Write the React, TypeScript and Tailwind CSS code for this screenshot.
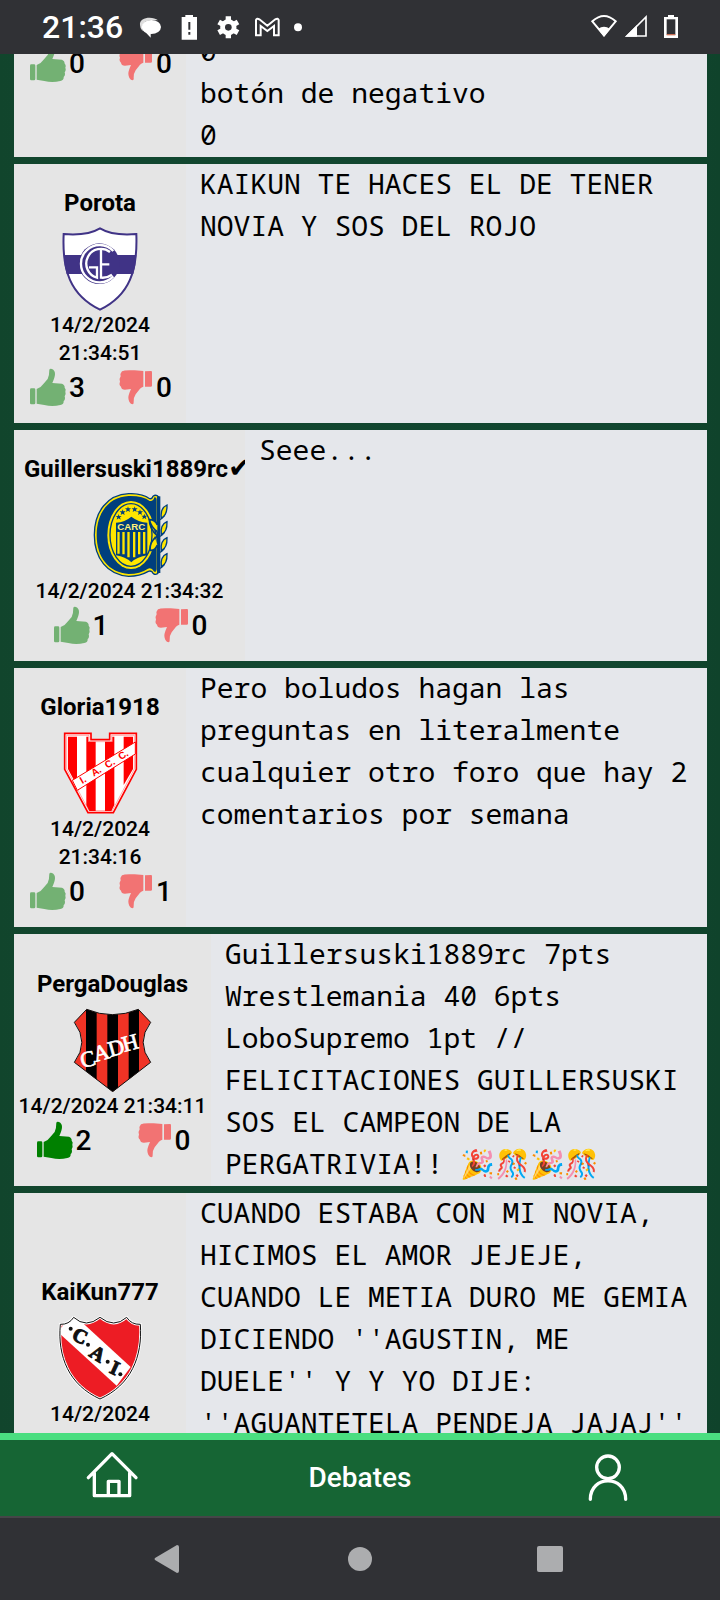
import type { ReactNode } from "react";

function ThumbUp() {
  return (
    <svg viewBox="90 624 117 126" className="h-[42px] w-[39px] shrink-0" fill="currentColor" aria-hidden="true">
      <rect x="93" y="688" width="16" height="48" rx="4" />
      <path d="M113 690Q126 686 133 675L146 660Q151 650 151 632Q153 627 159 630Q168 634 168 645Q168 654 160 672L189 674Q198 678 197 686Q202 691 199 698Q202 706 197 712Q200 722 194 726Q195 736 184 738Q160 744 136 738L113 734Z" />
    </svg>
  );
}

function ThumbDown() {
  return (
    <svg viewBox="340 624 117 126" className="h-[42px] w-[39px] shrink-0" fill="currentColor" aria-hidden="true">
      <path d="M433 637L451 636Q454 636 454 640V680Q454 683 450 683H433Z" />
      <path d="M428 636L402 634Q371 632 364 637Q357 645 360 652Q354 661 358 668Q354 678 361 683Q362 692 373 692L391 690Q383 708 383 716Q384 734 396 736Q400 735 399 729Q399 714 405 706L418 689Q423 684 428 683Z" />
    </svg>
  );
}

function ShieldGE() {
  return (
    <svg viewBox="174 201 252 252" className="size-[84px]" role="img" aria-label="GE">
      <path d="M191 222Q262 228 300 205Q338 228 409 222C413 330 390 405 300 449C210 405 186 330 191 222Z" fill="#fff" />
      <path d="M191 285H409Q408 315 400 342H200Q192 315 191 285Z" fill="#403386" />
      <path d="M191 222Q262 228 300 205Q338 228 409 222C413 330 390 405 300 449C210 405 186 330 191 222Z" fill="none" stroke="#403386" strokeWidth="6" />
      <circle cx="298" cy="311" r="61" fill="#403386" />
      <g fill="none" stroke="#fff" strokeWidth="7">
        <path d="M340 273A56 56 0 1 0 340 349" />
        <path d="M330 276A44 44 0 1 0 291 353V322H267" />
        <path d="M303 268V353Q320 355 336 344M303 313H328" />
      </g>
    </svg>
  );
}

function ShieldCARC() {
  const stars = [
    [354, 276],
    [366, 262],
    [382, 253],
    [402, 253],
    [418, 262],
    [431, 275],
  ];
  const leaves = [240, 290, 338, 386];
  return (
    <svg viewBox="262 204 252 252" className="size-[84px]" role="img" aria-label="CARC">
      <path d="M384 206Q425 205 447 221Q454 223 457 214Q466 207 474 216V442Q467 452 458 446Q453 435 443 439Q417 454 384 454C320 450 281 400 281 330C281 260 320 209 384 206Z" fill="#ffe600" stroke="#003f7d" strokeWidth="4" />
      <path d="M384 213Q427 212 447 228Q458 230 461 217Q468 216 468 224V433Q466 446 459 438Q453 427 442 431Q418 447 384 447C324 443 288 397 288 330C288 263 324 216 384 213Z" fill="#003f7d" />
      <ellipse cx="391" cy="330" rx="71" ry="102" fill="#ffe600" />
      <ellipse cx="391" cy="330" rx="63" ry="94" fill="none" stroke="#003f7d" strokeWidth="4" />
      <path d="M346 293Q373 291 392 275Q413 291 440 293V391Q410 395 392 412Q374 395 346 391Z" fill="#003f7d" />
      <path d="M350 321H357V386H350ZM365 321H372V388H365ZM380 321H387V397H380ZM397 321H404V397H397ZM412 321H419V388H412ZM427 321H434V386H427Z" fill="#ffe600" />
      <text x="392" y="315" textAnchor="middle" fontSize="29" fontWeight="700" fill="#fff17a" className="font-['Liberation_Sans']">CARC</text>
      {stars.map(([x, y]) => (
        <path key={x} transform={`translate(${x} ${y})`} d="M0-9L2-3H9L4 1L6 8L0 4L-6 8L-4 1L-9-3H-2Z" fill="#003f7d" />
      ))}
      <path d="M474 214V444" stroke="#003f7d" strokeWidth="10" />
      <path d="M446 284Q446 310 470 333Q446 350 448 376Q462 378 470 360M470 320Q452 308 446 284Q464 284 470 300" fill="#ffe600" stroke="#003f7d" strokeWidth="5" />
      {leaves.map((y) => (
        <path key={y} d={`M499 ${y}Q478 ${y + 9} 482 ${y + 39}Q500 ${y + 30} 499 ${y}ZM474 ${y + 46}Q484 ${y + 42} 492 ${y + 32}`} fill="#ffe600" stroke="#003f7d" strokeWidth="4" />
      ))}
    </svg>
  );
}

function ShieldIACC() {
  return (
    <svg viewBox="174 198 252 252" className="size-[84px]" role="img" aria-label="I.A.C.C.">
      <path d="M194 205H273V224H329V205H409V313L340 443H264L194 313Z" fill="#fff" stroke="#f00" strokeWidth="5" />
      <path d="M204 215H231V362L204 312ZM259 215H265V230H287V438H268L259 420ZM315 230H337V215H343V420L334 438H315ZM371 215H399V312L371 360Z" fill="#f00" />
      <path d="M200 211H267V230H335V211H403V312L337 437H267L200 312Z" fill="none" stroke="#f00" strokeWidth="1" />
      <path d="M217 346L406 231V267L232 376Z" fill="#fff" stroke="#f00" strokeWidth="3" />
      <g fontSize="30" fontWeight="700" fill="#f00" className="font-['Liberation_Sans']">
        <text transform="translate(247 357) rotate(-31)">I.</text>
        <text transform="translate(281 335) rotate(-31)">A.</text>
        <text transform="translate(322 311) rotate(-31)">C.</text>
        <text transform="translate(362 286) rotate(-31)">C.</text>
      </g>
    </svg>
  );
}

function ShieldCADH() {
  const outline = "M258 236Q335 268 413 236L450 275Q405 335 450 395L336 483L221 395Q266 335 221 275Z";
  return (
    <svg viewBox="211 232 252 252" className="size-[84px]" role="img" aria-label="CADH">
      <clipPath id="cadh">
        <path d={outline} />
      </clipPath>
      <g clipPath="url(#cadh)">
        <path d="M211 232H463V484H211Z" fill="#f03325" />
        <path d="M256 232H288V484H256ZM320 232H352V484H320ZM384 232H415V484H384Z" fill="#000" />
      </g>
      <path d={outline} fill="none" stroke="#111" strokeWidth="3" />
      <g fontSize="67" fill="#fff" stroke="#fff" strokeWidth="2" textAnchor="middle" className="font-['Liberation_Serif']">
        <text transform="translate(267 407) rotate(-15)">C</text>
        <text transform="translate(307 388) rotate(-15)">A</text>
        <text transform="translate(352 373) rotate(-15)">D</text>
        <text transform="translate(394 358) rotate(-15)">H</text>
      </g>
    </svg>
  );
}

function ShieldCAI() {
  const outline = "M181 403Q207 404 221 382Q258 416 300 382Q342 416 380 382Q394 404 421 403C428 500 393 585 300 627C207 585 172 500 181 403Z";
  return (
    <svg viewBox="174 378 252 252" className="size-[84px]" role="img" aria-label="C.A.I.">
      <clipPath id="cai">
        <path d={outline} />
      </clipPath>
      <path d={outline} fill="#ed1c24" />
      <path clipPath="url(#cai)" d="M174 426L215 371L245 396L392 531L350 587Z" fill="#fff" />
      <path d={outline} fill="none" stroke="#fff" strokeWidth="8" />
      <path d={outline} fill="none" stroke="#111" strokeWidth="3" />
      <g fontSize="60" fontWeight="700" fill="#111" stroke="#111" strokeWidth="3" textAnchor="middle" className="font-['Liberation_Serif']">
        <text transform="translate(232 456) rotate(25)">C</text>
        <text transform="translate(282 508) rotate(32)">A</text>
        <text transform="translate(336 552) rotate(25)">I</text>
      </g>
      <g fill="#111">
        <circle cx="212" cy="416" r="6" />
        <circle cx="264" cy="464" r="6" />
        <circle cx="323" cy="515" r="6" />
        <circle cx="361" cy="553" r="6" />
      </g>
    </svg>
  );
}

function Votes({ up, down, voted }: { up: number; down: number; voted?: boolean }) {
  return (
    <div className="flex w-full justify-center text-[28px] font-medium leading-[42px]">
      <button type="button" aria-label={`Me gusta ${up}`} className="flex max-w-[98px] flex-1 items-center justify-center gap-px">
        <span className={voted ? "text-[#008000]" : "text-[#73b173]"}>
          <ThumbUp />
        </span>
        {up}
      </button>
      <button type="button" aria-label={`No me gusta ${down}`} className="flex max-w-[98px] flex-1 items-center justify-center gap-[3px]">
        <span className="text-[#f27373]">
          <ThumbDown />
        </span>
        {down}
      </button>
    </div>
  );
}

type PostProps = {
  width?: string;
  name?: string;
  verified?: boolean;
  crest?: ReactNode;
  date?: string;
  votes?: ReactNode;
  align?: string;
  children: ReactNode;
};

function Post({ width = "w-[172px]", name, verified, crest, date, votes, align = "justify-center py-3.5", children }: PostProps) {
  return (
    <article className="flex bg-[#e5e7eb]">
      <aside className={`flex shrink-0 flex-col items-center overflow-hidden bg-[#e5e5e5] ${width} ${align}`}>
        {name && (
          <h2 className="h-[49px] w-full whitespace-nowrap px-2.5 text-center text-2xl font-bold leading-[51px]">
            {name}
            {verified && <span className="font-['DejaVu_Sans'] text-[28px] leading-none">✔</span>}
          </h2>
        )}
        {crest}
        {date && <time className="px-1 text-center text-[21px] font-medium leading-7">{date}</time>}
        {votes}
      </aside>
      <p className="-mt-0.5 min-w-0 flex-1 whitespace-pre-line px-3.5 pb-0.5 font-['Noto_Sans_Mono','DejaVu_Sans_Mono','Noto_Color_Emoji',monospace] text-[28px] leading-[42px]">
        {children}
      </p>
    </article>
  );
}

function StatusBar() {
  return (
    <header className="flex h-[54px] shrink-0 items-center bg-[#303135] px-[42px] text-white">
      <span className="text-[32px] font-medium leading-[54px]">21:36</span>
      <svg viewBox="405 30 510 102" className="ml-3 h-[34px] w-[170px]" aria-hidden="true">
        <path d="M420 75C417 50 460 48 474 61Q420 54 428 94Q420 86 420 75Z" fill="#ddd" />
        <ellipse cx="454" cy="81" rx="29" ry="21" fill="#fff" />
        <path d="M434 94L452 113V98Z" fill="#fff" />
        <path d="M545 51H556V45H579V51H591V119H545Z" fill="#fff" />
        <path d="M568 66V89M568 96V104" stroke="#303135" strokeWidth="6" />
        <g transform="translate(685 82)">
          <path d="M0-33V33M-29-16L29 16M-29 16L29-16" stroke="#fff" strokeWidth="16" />
          <circle r="17" fill="none" stroke="#fff" strokeWidth="15" />
          <circle r="10" fill="#303135" />
        </g>
        <path d="M768 106V60Q770 53 778 58L802 77L826 58Q834 53 836 60V106H822V78L802 93L782 78V106Z" fill="none" stroke="#fff" strokeWidth="6" />
        <circle cx="894" cy="82" r="12" fill="#fff" />
      </svg>
      <svg viewBox="690 30 264 102" className="ml-auto h-[34px] w-[88px]" aria-hidden="true">
        <path d="M697 64Q732 32 767 64L732 106Z" fill="none" stroke="#fff" strokeWidth="6" />
        <path d="M732 110L714 87Q732 74 750 87Z" fill="#fff" />
        <path d="M801 108L858 51V108Z" fill="none" stroke="#fff" strokeWidth="5" />
        <path d="M795 110L831 75V110Z" fill="#fff" />
        <path d="M924 45H942V51H954V114H912V51H924Z" fill="#fff" />
        <path d="M920 58H946V104H920Z" fill="#303135" />
        <path d="M920 102H946V106H920Z" fill="#c96f55" />
      </svg>
    </header>
  );
}

export default function App() {
  return (
    <div className="flex h-screen flex-col overflow-hidden bg-[#11452e] font-['Roboto',sans-serif] text-black">
      <StatusBar />
      <main className="min-h-0 flex-1 overflow-hidden bg-[linear-gradient(90deg,#11452c,#124730_15%,#114630_85%,#0f432b)] pl-3.5 pr-[13px]">
        <div className="-mt-[23px] flex flex-col gap-[7px]">
          <Post align="justify-start pt-3" votes={<Votes up={0} down={0} />}>
            {"0\nbotón de negativo\n0"}
          </Post>
          <Post name="Porota" crest={<ShieldGE />} date="14/2/2024 21:34:51" votes={<Votes up={3} down={0} />}>
            KAIKUN TE HACES EL DE TENER NOVIA Y SOS DEL ROJO
          </Post>
          <Post width="w-[231px]" name="Guillersuski1889rc" verified crest={<ShieldCARC />} date="14/2/2024 21:34:32" votes={<Votes up={1} down={0} />}>
            Seee...
          </Post>
          <Post name="Gloria1918" crest={<ShieldIACC />} date="14/2/2024 21:34:16" votes={<Votes up={0} down={1} />}>
            Pero boludos hagan las preguntas en literalmente cualquier otro foro que hay 2 comentarios por semana
          </Post>
          <Post width="w-[197px]" name="PergaDouglas" crest={<ShieldCADH />} date="14/2/2024 21:34:11" votes={<Votes up={2} down={0} voted />}>
            Guillersuski1889rc 7pts Wrestlemania 40 6pts LoboSupremo 1pt // FELICITACIONES GUILLERSUSKI SOS EL CAMPEON DE LA PERGATRIVIA!! 🎉🎊🎉🎊
          </Post>
          <Post align="justify-start pt-[74px]" name="KaiKun777" crest={<ShieldCAI />} date="14/2/2024">
            CUANDO ESTABA CON MI NOVIA, HICIMOS EL AMOR JEJEJE, CUANDO LE METIA DURO ME GEMIA DICIENDO ''AGUSTIN, ME DUELE'' Y Y YO DIJE: ''AGUANTETELA PENDEJA JAJAJ''
          </Post>
        </div>
      </main>
      <nav className="flex h-[83px] shrink-0 items-center border-t-[7px] border-[#4ade80] bg-[#166534] text-white">
        <a href="#inicio" aria-label="Inicio" className="flex flex-1 justify-center pr-6">
          <svg viewBox="250 91 168 168" className="size-14" fill="none" stroke="#fff" strokeWidth="10" strokeLinecap="round" strokeLinejoin="round" aria-hidden="true">
            <path d="M263 174L334 102L406 174M281 159V228H387V159M323 225V185H355V225" />
          </svg>
        </a>
        <h1 className="flex-1 text-center text-[28px] font-medium leading-[42px]">Debates</h1>
        <a href="#perfil" aria-label="Perfil" className="flex flex-1 justify-center pl-6">
          <svg viewBox="664 91 168 168" className="size-14" fill="none" stroke="#fff" strokeWidth="10" strokeLinecap="round" aria-hidden="true">
            <circle cx="748" cy="143" r="34" />
            <path d="M695 239C695 165 801 165 801 239" />
          </svg>
        </a>
      </nav>
      <footer className="flex h-[84px] shrink-0 items-center justify-center gap-[150px] border-t-2 border-[#454648] bg-[#303135]">
        <button type="button" aria-label="Atrás">
          <svg viewBox="3 0 40 40" className="size-10" aria-hidden="true">
            <path d="M8 19L30 6Q32 6 32 8V32Q32 34 30 34L8 21Q7 20 8 19Z" fill="#acadaf" />
          </svg>
        </button>
        <button type="button" aria-label="Inicio del sistema">
          <svg viewBox="0 0 40 40" className="size-10" aria-hidden="true">
            <circle cx="20" cy="20" r="12" fill="#acadaf" />
          </svg>
        </button>
        <button type="button" aria-label="Recientes">
          <svg viewBox="0 0 40 40" className="size-10" aria-hidden="true">
            <rect x="7" y="7" width="26" height="26" rx="2" fill="#acadaf" />
          </svg>
        </button>
      </footer>
    </div>
  );
}
